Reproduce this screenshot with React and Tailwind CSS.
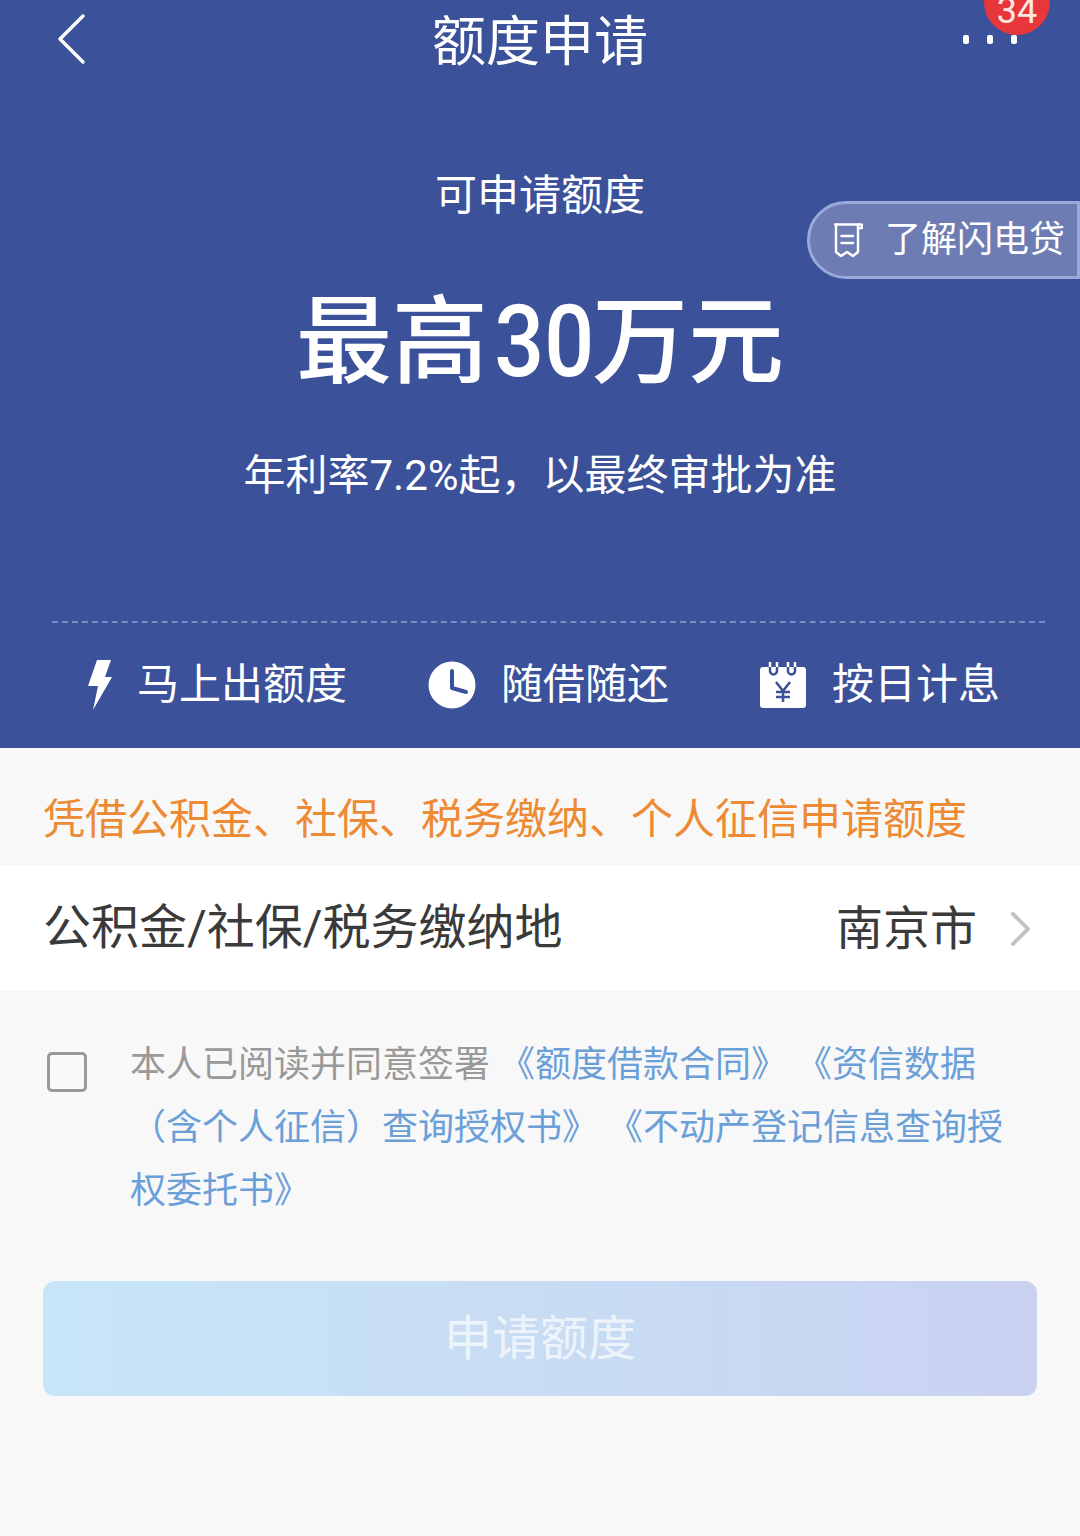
import { useState } from "react";

const font = { fontFamily: 'Roboto, "Noto Sans CJK SC", sans-serif' };

function BoltIcon() {
  return (
    <svg width="26" height="52" viewBox="0 0 26 52" fill="#fff">
      <path d="M10 1 L24 1 L18 18 L25 18 L6 51 L11 27 L1 27 Z" />
    </svg>
  );
}

function ClockIcon() {
  return (
    <svg width="48" height="48" viewBox="0 0 48 48">
      <circle cx="24" cy="24" r="23.5" fill="#fff" />
      <path d="M24 10 V27 L38 31" fill="none" stroke="#3b5199" strokeWidth="4" strokeLinecap="round" strokeLinejoin="round" />
    </svg>
  );
}

function CalendarIcon() {
  return (
    <svg width="48" height="48" viewBox="0 0 48 48">
      <rect x="1" y="6" width="46" height="41" rx="3" fill="#fff" />
      <path d="M11 6 V10 a3.5 3.5 0 0 0 7 0 V6 M29 6 V10 a3.5 3.5 0 0 0 7 0 V6" fill="none" stroke="#3b5199" strokeWidth="2.5" />
      <path d="M11 1 V6 M18 1 V6 M29 1 V6 M36 1 V6" fill="none" stroke="#fff" strokeWidth="2.5" />
      <path d="M17 21 L24 30 L31 21 M24 30 V41 M17 31 H31 M17 36 H31" fill="none" stroke="#3b5199" strokeWidth="2.5" />
    </svg>
  );
}

function ReceiptIcon() {
  return (
    <svg width="30" height="36" viewBox="0 0 30 36" fill="none" stroke="#fff" strokeWidth="2.4" strokeLinejoin="round" strokeLinecap="round">
      <path d="M2 2.5 H28 a1 1 0 0 1 1 1 V6 H25" />
      <path d="M3 2.5 V30 L8 34 L14 30 L20 34 L25 30 V2.5" />
      <path d="M8.5 14 H20 M8.5 21 H20" />
    </svg>
  );
}

function Feature({ icon, text, iconGap }) {
  return (
    <div className={`flex items-center ${iconGap}`}>
      {icon}
      <span className="text-[42px] leading-none text-white">{text}</span>
    </div>
  );
}

export default function App() {
  const [agreed, setAgreed] = useState(false);

  return (
    <div className="relative h-[1536px] w-[1080px] overflow-hidden bg-[#f8f8f8]" style={font}>
      <div className="flex h-[748px] flex-col bg-[#3b5199]">
        <div className="relative flex h-[80px] items-center justify-center">
          <svg className="absolute left-[56px] top-[13px]" width="30" height="52" viewBox="0 0 30 52" fill="none" stroke="#fff" strokeWidth="3.5" strokeLinecap="round" strokeLinejoin="round">
            <path d="M27 3 L4 26 L27 49" />
          </svg>
          <h1 className="mt-[6px] text-[54px] font-normal leading-none text-white">额度申请</h1>
          <div className="absolute left-[963px] top-[35px] flex gap-[18px]">
            <span className="h-[9px] w-[6px] rounded-[2px] bg-white" />
            <span className="h-[9px] w-[6px] rounded-[2px] bg-white" />
            <span className="h-[9px] w-[6px] rounded-[2px] bg-white" />
          </div>
          <div className="absolute left-[984px] top-[-31px] flex h-[66px] w-[66px] items-end justify-center rounded-full bg-[#e8373a] pb-[6px] text-[36px] leading-none text-[#fde8e4]">
            34
          </div>
        </div>

        <div className="mt-[95px] text-center text-[42px] leading-none text-white">可申请额度</div>
        <div className="mt-[78px] flex h-[94px] items-center justify-center text-[96px] font-medium leading-none text-white">
          <span>最高</span>
          <span className="inline-block w-[104px] scale-x-[0.88] text-center text-[100px]">30</span>
          <span>万元</span>
        </div>
        <div className="mt-[66px] text-center text-[42px] leading-none text-white">年利率7.2%起，以最终审批为准</div>

        <div className="ml-[52px] mr-[35px] mt-[124px] border-t-2 border-dashed border-[#7a8cc4]" />

        <div className="mt-[36px] flex items-center pl-[87px]">
          <Feature icon={<BoltIcon />} text="马上出额度" iconGap="gap-[24px]" />
          <div className="ml-[81px]">
            <Feature icon={<ClockIcon />} text="随借随还" iconGap="gap-[25px]" />
          </div>
          <div className="ml-[90px]">
            <Feature icon={<CalendarIcon />} text="按日计息" iconGap="gap-[25px]" />
          </div>
        </div>
      </div>

      <div className="absolute right-0 top-[201px] flex h-[78px] w-[273px] items-center gap-[22px] rounded-l-[39px] border-[3px] border-[#9aa9dc] bg-[#6d7db3] pl-[23px]">
        <ReceiptIcon />
        <span className="text-[36px] leading-none text-white">了解闪电贷</span>
      </div>

      <div className="flex h-[117px] items-center pl-[43px] pt-[26px] text-[42px] leading-none text-[#ed8a33]">
        凭借公积金、社保、税务缴纳、个人征信申请额度
      </div>

      <div className="flex h-[126px] items-center justify-between bg-white pl-[43px] pr-[48px]">
        <span className="text-[48px] leading-none text-[#3a3a3a]">公积金/社保/税务缴纳地</span>
        <div className="flex items-center gap-[33px]">
          <span className="text-[47px] leading-none text-[#3a3a3a]">南京市</span>
          <svg className="mt-[2px]" width="22" height="36" viewBox="0 0 22 36" fill="none" stroke="#c4c4c4" strokeWidth="4" strokeLinecap="round" strokeLinejoin="round">
            <path d="M3 3 L18 18 L3 33" />
          </svg>
        </div>
      </div>

      <div className="flex pl-[47px] pr-[60px] pt-[42px]">
        <button
          onClick={() => setAgreed(!agreed)}
          className="mt-[19px] h-[40px] w-[40px] shrink-0 rounded-[5px] border-[3px] border-[#999]"
        />
        <p className="ml-[43px] pt-[1px] text-[36px] leading-[63px] text-[#999]">
          本人已阅读并同意签署
          <span className="text-[#6b9fd8]"> 《额度借款合同》 《资信数据（含个人征信）查询授权书》 《不动产登记信息查询授权委托书》</span>
        </p>
      </div>

      <button className="mx-[43px] mt-[58px] flex h-[115px] w-[994px] items-center justify-center rounded-[12px] bg-gradient-to-r from-[#c7e6f7] to-[#c9d2f1] text-[48px] leading-none text-white/70">
        申请额度
      </button>
    </div>
  );
}
